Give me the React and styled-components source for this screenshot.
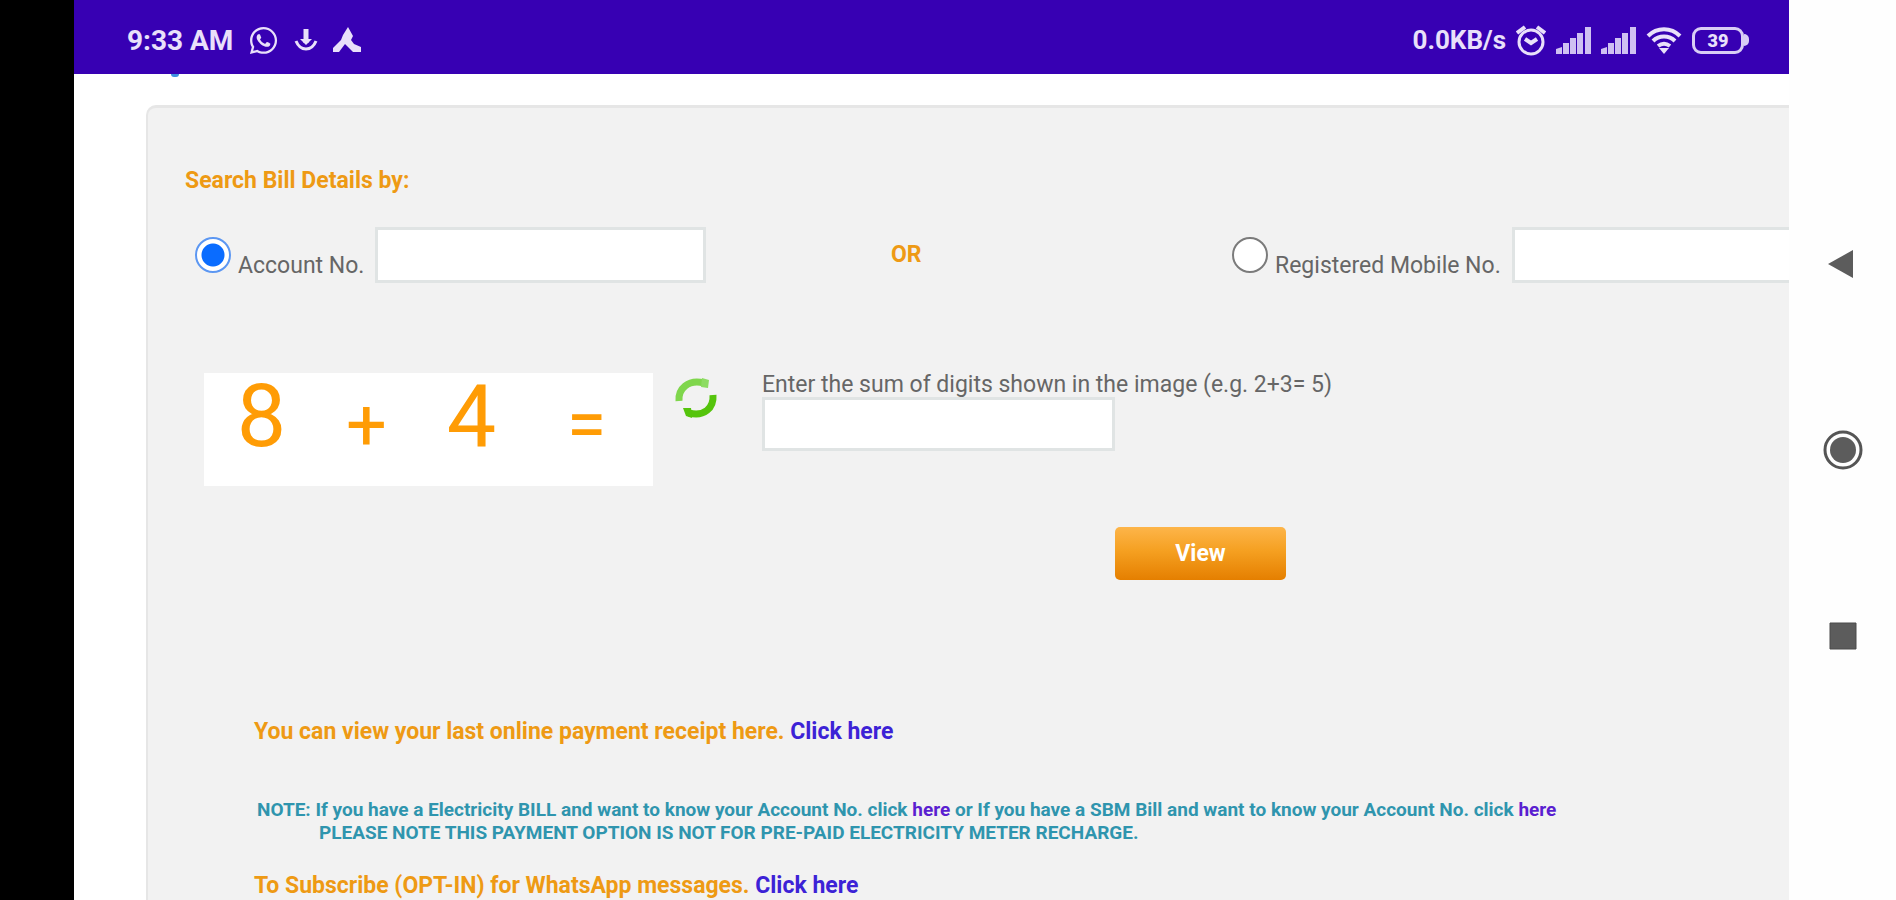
import { useState } from "react";
import styled, { createGlobalStyle } from "styled-components";
import { FaWhatsapp } from "react-icons/fa";

const GlobalStyle = createGlobalStyle`
  * {
    box-sizing: border-box;
  }

  body {
    margin: 0;
    background: #000;
    font-family: Roboto, "Liberation Sans", sans-serif;
  }
`;

const Device = styled.div`
  display: flex;
  height: 100vh;
  padding-left: 74px;
  overflow: hidden;
`;

const Screen = styled.div`
  flex: 1;
  min-width: 0;
  display: flex;
  flex-direction: column;
  background: #fff;
  overflow: hidden;
`;

const StatusBar = styled.header`
  display: flex;
  justify-content: space-between;
  align-items: center;
  flex-shrink: 0;
  height: 74px;
  padding: 6px 40px 0 53px;
  background: #3700b3;
  color: #e9e0fa;
`;

const StatusGroup = styled.div`
  display: flex;
  align-items: center;
  gap: ${(props) => props.gap}px;
`;

const StatusText = styled.span`
  font-size: ${(props) => props.size}px;
  font-weight: 700;
  white-space: nowrap;
`;

const BatteryWrap = styled.span`
  display: flex;
  align-items: center;

  &::after {
    content: "";
    width: 5px;
    height: 12px;
    border-radius: 0 5px 5px 0;
    background: #d9cdf5;
  }
`;

const Battery = styled.span`
  display: flex;
  align-items: center;
  justify-content: center;
  width: 52px;
  height: 27px;
  border: 3px solid #d9cdf5;
  border-radius: 9px;
  font-size: 18px;
  font-weight: 900;
`;

// bottom edge of a link that is scrolled under the status bar
const LinkTail = styled.div`
  flex-shrink: 0;
  width: 8px;
  height: 3px;
  margin-left: 97px;
  border-radius: 0 0 4px 4px;
  background: #3d8fe0;
`;

const Panel = styled.main`
  flex: 1;
  margin: 28px 0 0 72px;
  padding: 58px 0 0 37px;
  border: 3px solid #e6e6e6;
  border-width: 3px 0 0 2px;
  border-top-left-radius: 10px;
  background: #f2f2f2;
  white-space: nowrap;
`;

const Heading = styled.h1`
  margin: 0;
  font-size: 23px;
  line-height: 30px;
  font-weight: 700;
  color: #ee9a14;
`;

const SearchRow = styled.div`
  display: grid;
  grid-template-columns: 512px 1fr 557px;
  align-items: start;
  margin-top: 31px;
  padding-left: 10px;
`;

const Choice = styled.div`
  display: flex;
  align-items: center;
`;

const Radio = styled.input`
  appearance: none;
  width: 36px;
  height: 36px;
  margin: 0 7px 0 0;
  flex-shrink: 0;
  border: 2px solid ${(props) => (props.checked ? "#5c97f2" : "#7b7b7b")};
  border-radius: 50%;
  background: ${(props) =>
    props.checked ? "radial-gradient(circle, #0a6cff 11px, #fff 12px)" : "#fff"};
`;

const Label = styled.label`
  padding: 22px 11px 0 0;
  font-size: 23px;
  line-height: 26px;
  color: #666;
`;

const TextInput = styled.input`
  width: ${(props) => props.w}px;
  height: ${(props) => props.h || 56}px;
  margin: 0;
  padding: 0 12px;
  flex-shrink: 0;
  border: 3px solid #e0e4e4;
  border-radius: 0;
  background: #fff;
  font: 23px Roboto, sans-serif;
  color: #444;
`;

const Or = styled.strong`
  padding: 14px 0 0 184px;
  font-size: 23px;
  line-height: 28px;
  color: #ee9a14;
`;

const CaptchaRow = styled.div`
  display: flex;
  align-items: flex-start;
  margin-top: 90px;
  padding-left: 19px;
`;

const Captcha = styled.div`
  display: grid;
  grid-template-columns: 105px 105px 105px 125px;
  width: 449px;
  height: 113px;
  padding-left: 5px;
  background: #fff;
  color: #ff9c05;
  font-size: 88px;
  line-height: 86px;
  text-align: center;
`;

const Digit = styled.span`
  font-weight: 400;
`;

const Operator = styled.span`
  padding-top: 9px;
  font-size: 72px;
  font-weight: 400;
`;

const RefreshButton = styled.button`
  display: flex;
  margin: 3px 0 0 21px;
  padding: 0;
  border: 0;
  background: none;
`;

const Answer = styled.div`
  display: flex;
  flex-direction: column;
  margin-left: 44px;
`;

const AnswerLabel = styled.label`
  font-size: 23px;
  line-height: 24px;
  color: #666;
`;

const ViewButton = styled.button`
  display: block;
  width: 171px;
  height: 53px;
  margin: 41px 0 0 930px;
  border: 0;
  border-radius: 5px;
  background: linear-gradient(#fdb54a, #f5a021 45%, #e57f00);
  color: #fff;
  font: 700 23px Roboto, sans-serif;
`;

const Links = styled.section`
  padding: 137px 0 0 69px;
`;

const Line = styled.p`
  margin: 0;
  font-size: 23px;
  line-height: 30px;
  font-weight: 700;
  color: #ee9a14;
`;

const Note = styled.p`
  margin: 51px 0 27px 3px;
  font-size: 19px;
  line-height: 23px;
  font-weight: 700;
  color: #2f95ae;
`;

const NoteIndent = styled.span`
  display: block;
  padding-left: 62px;
`;

const Anchor = styled.a`
  color: ${(props) => props.color || "#3c22d6"};
  text-decoration: none;
`;

const NavBar = styled.nav`
  display: flex;
  flex-direction: column;
  align-items: center;
  justify-content: center;
  gap: 146px;
  width: 107px;
  flex-shrink: 0;
  background: #fefefe;
`;

const NavButton = styled.button`
  display: flex;
  padding: 0;
  border: 0;
  background: none;
`;

const AnchorIcon = () => (
  <svg width="24" height="24" viewBox="0 0 24 24" fill="none" stroke="currentColor">
    <path d="M12 1v14" strokeWidth="5" />
    <path d="M6 11l6 6 6-6z" fill="currentColor" stroke="none" />
    <path d="M2 13c2 5 5 8 10 8s8-3 10-8" strokeWidth="3" />
  </svg>
);

const PeakIcon = () => (
  <svg width="28" height="26" viewBox="0 0 28 26" fill="currentColor">
    <path d="M15 0l5 9-2 4 3 4 7 3v5h-8l-8-8-6 8H0v-4l8-8 2-5z" />
  </svg>
);

const AlarmIcon = () => (
  <svg width="30" height="31" viewBox="0 0 30 31" fill="none" stroke="currentColor" strokeWidth="3">
    <circle cx="15" cy="17" r="12" />
    <path d="M1 8l8-6M29 8l-8-6" strokeWidth="4" />
    <path d="M9 14l6 4 6-4" strokeWidth="4" />
  </svg>
);

const SignalIcon = () => (
  <svg width="35" height="27" viewBox="0 0 35 27" fill="#cfc0f2">
    <path d="M0 22l6-2v7H0zM7 16h6v11H7zM14 11h6v16h-6zM21 6h6v21h-6zM29 0h6v27h-6z" />
  </svg>
);

const WifiIcon = () => (
  <svg width="36" height="27" viewBox="0 0 36 27" fill="none" stroke="currentColor" strokeWidth="4">
    <path d="M2 9c9-9 23-9 32 0M7 14c6-6 16-6 22 0M12 19c4-3 8-3 12 0" />
    <path d="M13 21l5 6 5-6z" fill="currentColor" stroke="none" />
  </svg>
);

const RefreshIcon = () => (
  <svg width="44" height="44" viewBox="0 0 44 44" fill="none" strokeWidth="7">
    <path d="M5 25C4 13 14 3 30 7" stroke="#7fd64c" />
    <path d="M28 2l7 2-1 8-7-1z" fill="#8ddc62" />
    <path d="M39 19c1 13-9 22-24 18" stroke="#55c40c" />
    <path d="M9 32l8 0 1 10-6-2z" fill="#55c40c" />
  </svg>
);

export default function App() {
  const [searchBy, setSearchBy] = useState("account");

  return (
    <>
      <GlobalStyle />
      <Device>
        <Screen>
          <StatusBar>
            <StatusGroup gap={15}>
              <StatusText size={28}>9:33 AM</StatusText>
              <FaWhatsapp size={31} />
              <AnchorIcon />
              <PeakIcon />
            </StatusGroup>
            <StatusGroup gap={10}>
              <StatusText size={26}>0.0KB/s</StatusText>
              <AlarmIcon />
              <SignalIcon />
              <SignalIcon />
              <WifiIcon />
              <BatteryWrap>
                <Battery>39</Battery>
              </BatteryWrap>
            </StatusGroup>
          </StatusBar>
          <LinkTail />
          <Panel>
            <Heading>Search Bill Details by:</Heading>
            <SearchRow>
              <Choice>
                <Radio
                  type="radio"
                  name="searchBy"
                  id="byAccount"
                  checked={searchBy === "account"}
                  onChange={() => setSearchBy("account")}
                />
                <Label htmlFor="byAccount">Account No.</Label>
                <TextInput w={331} aria-label="Account No." />
              </Choice>
              <Or>OR</Or>
              <Choice>
                <Radio
                  type="radio"
                  name="searchBy"
                  id="byMobile"
                  checked={searchBy === "mobile"}
                  onChange={() => setSearchBy("mobile")}
                />
                <Label htmlFor="byMobile">Registered Mobile No.</Label>
                <TextInput w={331} aria-label="Registered Mobile No." />
              </Choice>
            </SearchRow>
            <CaptchaRow>
              <Captcha>
                <Digit>8</Digit>
                <Operator>+</Operator>
                <Digit>4</Digit>
                <Operator>=</Operator>
              </Captcha>
              <RefreshButton type="button" aria-label="Refresh">
                <RefreshIcon />
              </RefreshButton>
              <Answer>
                <AnswerLabel htmlFor="sum">
                  Enter the sum of digits shown in the image (e.g. 2+3= 5)
                </AnswerLabel>
                <TextInput id="sum" w={353} h={54} />
              </Answer>
            </CaptchaRow>
            <ViewButton type="button">View</ViewButton>
            <Links>
              <Line>
                You can view your last online payment receipt here. <Anchor href="#receipt">Click here</Anchor>
              </Line>
              <Note>
                NOTE: If you have a Electricity BILL and want to know your Account No. click{" "}
                <Anchor href="#bill" color="#5a1fd0">here</Anchor> or If you have a SBM Bill and want to know your
                Account No. click <Anchor href="#sbm" color="#5a1fd0">here</Anchor>
                <NoteIndent>PLEASE NOTE THIS PAYMENT OPTION IS NOT FOR PRE-PAID ELECTRICITY METER RECHARGE.</NoteIndent>
              </Note>
              <Line>
                To Subscribe (OPT-IN) for WhatsApp messages. <Anchor href="#optin">Click here</Anchor>
              </Line>
            </Links>
          </Panel>
        </Screen>
        <NavBar>
          <NavButton type="button" aria-label="Back">
            <svg width="40" height="40" viewBox="0 0 40 40">
              <path d="M5 20L30 6v28z" fill="#5c5c5c" />
            </svg>
          </NavButton>
          <NavButton type="button" aria-label="Home">
            <svg width="40" height="40" viewBox="0 0 40 40">
              <circle cx="20" cy="20" r="18" fill="none" stroke="#555" strokeWidth="3" />
              <circle cx="20" cy="20" r="13" fill="#5c5c5c" />
            </svg>
          </NavButton>
          <NavButton type="button" aria-label="Recents">
            <svg width="40" height="40" viewBox="0 0 40 40">
              <path d="M7 7h26v26H7z" fill="#5c5c5c" stroke="#4a4a4a" strokeWidth="1" />
            </svg>
          </NavButton>
        </NavBar>
      </Device>
    </>
  );
}
